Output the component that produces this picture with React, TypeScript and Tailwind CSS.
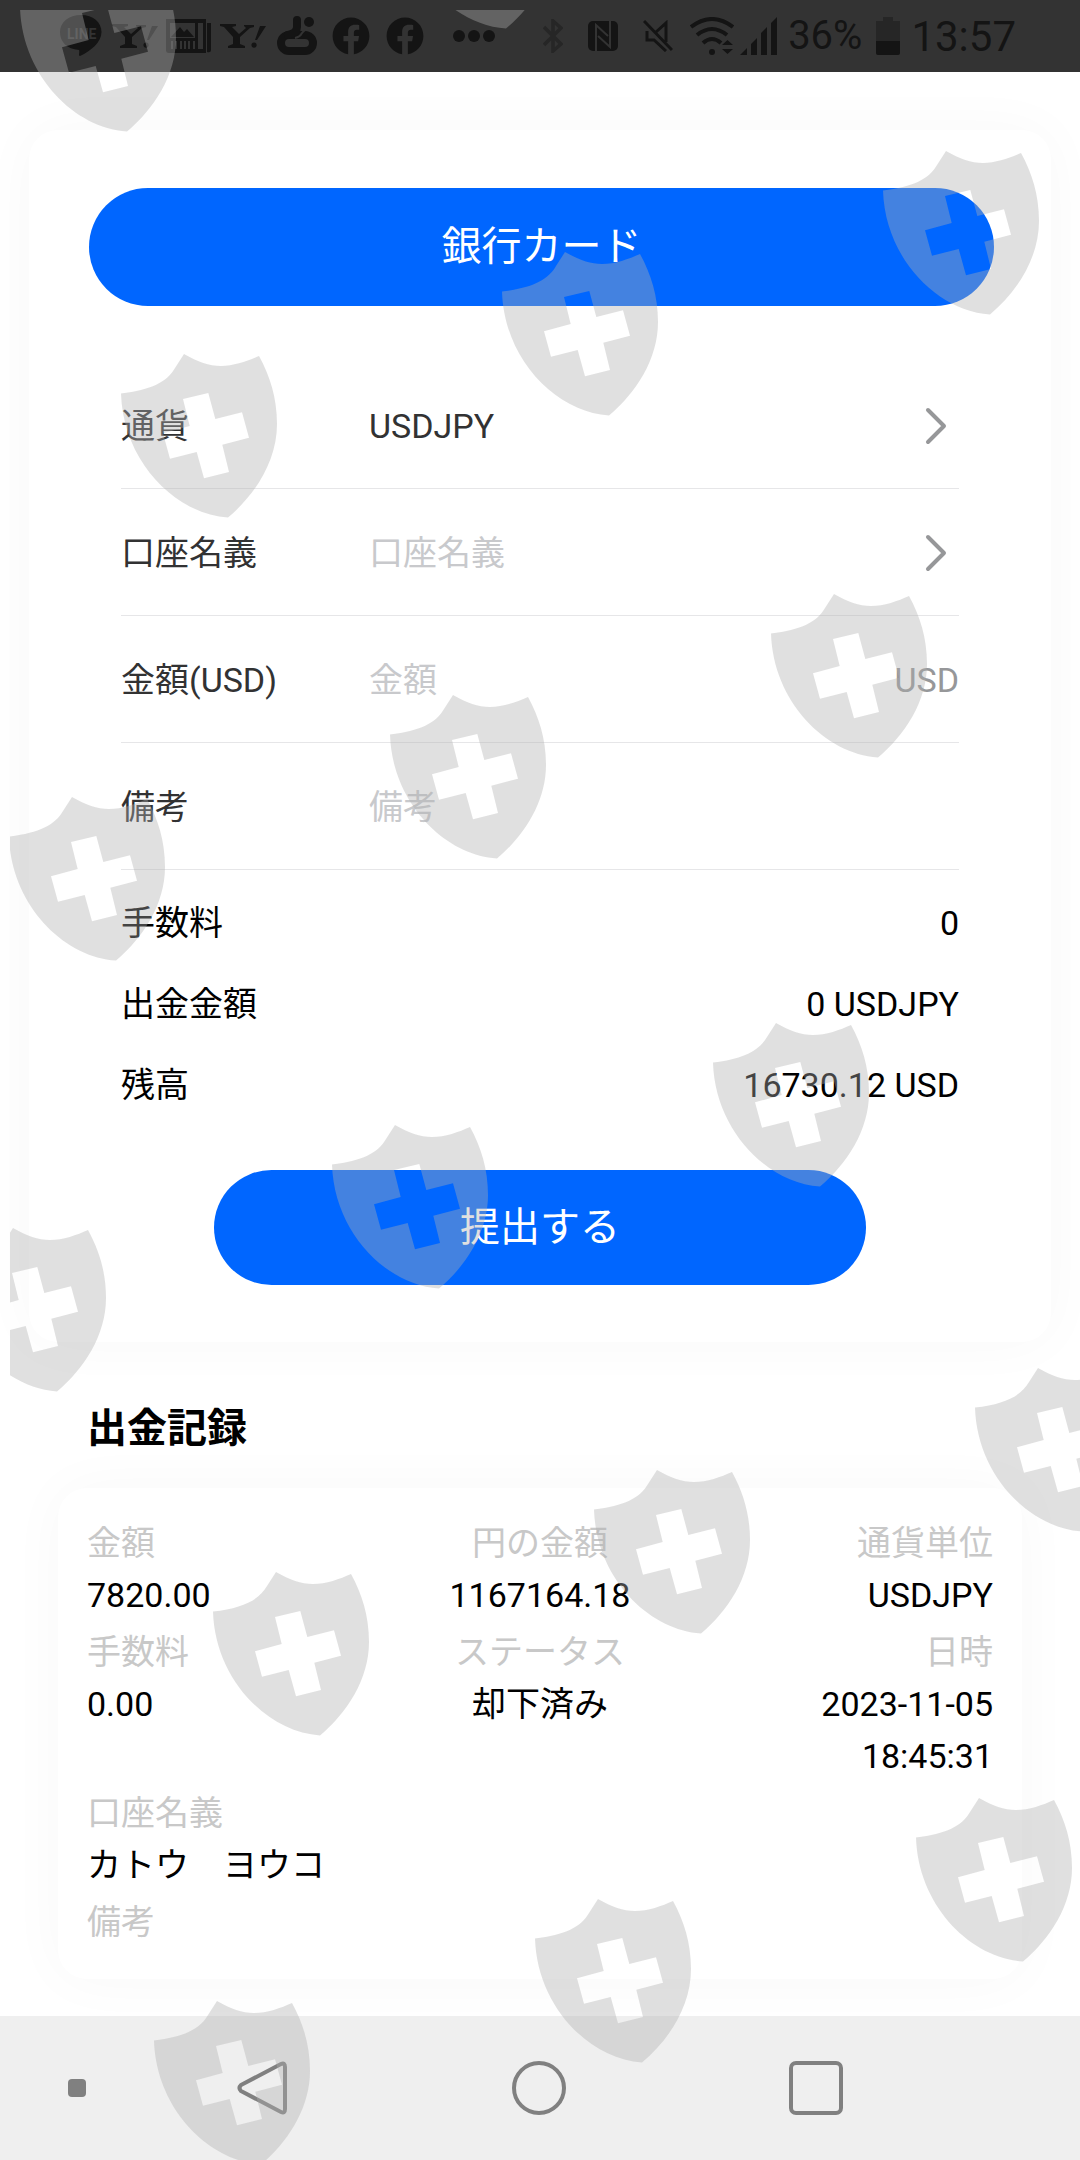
import React from "react";
import { FaFacebook } from "react-icons/fa";

const shields = [
  [20, -32],
  [399, -135],
  [883, 151],
  [502, 252],
  [121, 354],
  [771, 594],
  [390, 695],
  [9, 797],
  [713, 1023],
  [332, 1125],
  [-50, 1228],
  [975, 1368],
  [594, 1470],
  [213, 1572],
  [916, 1798],
  [535, 1899],
  [154, 2001],
];

function Watermark() {
  return (
    <div className="pointer-events-none absolute top-[10px] right-0 bottom-0 left-[10px] overflow-hidden" aria-hidden="true">
      <svg className="h-full w-full">
        <defs>
          <path
            id="shield"
            fillRule="evenodd"
            d="M63 0C77 8 88 12 100 12C113 12 127 7 138 2C149 22 156 44 156 70C156 107 134 141 107 163.500C54 160 2 107 0 39.500C30 36 46 28 54 14ZM62 45L68.700 72L42 79.300L49 104.700L75.700 98L83 124.300L108 118L101.300 90.700L128 83.700L121 58.300L94.300 65L87.300 39Z"
          />
        </defs>
        <g fill="#afafaf" fillOpacity="0.39">
          {shields.map(([x, y]) => (
            <use key={`${x}-${y}`} href="#shield" x={x - 10} y={y - 10} />
          ))}
        </g>
      </svg>
    </div>
  );
}

function YahooIcon() {
  return (
    <svg viewBox="0 0 46 24" className="h-6 w-[46px]" fill="currentColor">
      <path d="M0 0H16V2L12 3L19 10L26 4L24 2V1H34V3L30 4L20 13V20L25 22V24H8V22L13 20V13L4 3L0 2Z" />
      <path d="M40 2L46 2L37 16L35 16ZM34 18.500a2.600 2.600 0 1 0 .1 0Z" />
    </svg>
  );
}

function StatusBar() {
  return (
    <header className="flex h-[72px] items-center justify-between bg-[#333] pr-16 pl-[58px] font-[Roboto,sans-serif] text-[#141414]">
      <div className="flex items-center gap-2">
        <svg viewBox="0 0 46 42" className="h-[42px] w-[46px]" fill="currentColor">
          <path d="M23 0C35 0 43.500 7 43.500 17C43.500 27 33 36 22 41C20 41 22 37 21 35C9 34 2 27 2 17C2 7 11 0 23 0Z" />
          <text x="9" y="24" fontSize="14" fontWeight="700" fill="#333">LINE</text>
        </svg>
        <YahooIcon />
        <svg viewBox="0 0 46 34" className="h-[34px] w-[46px]">
          <path fill="currentColor" fillRule="evenodd" d="M0 0H40V34H3Q0 34 0 31V0ZM4 4V19H29V4ZM32 4V30H37V4Z" />
          <path stroke="#333" strokeWidth="2" d="M6 22V30M10 22V30M15 22V30M19 22V30M23 22V30M28 22V30" />
          <path fill="currentColor" d="M5 18L14 8L18 13L21 10L28 18ZM41 4H45V31Q45 34 41 33Z" />
        </svg>
        <YahooIcon />
        <svg viewBox="0 0 44 42" className="h-[42px] w-11" fill="none" stroke="currentColor">
          <rect x="7" y="20" width="32" height="16" rx="8" strokeWidth="8" />
          <path strokeWidth="8" strokeLinecap="round" d="M23 5V12Q23 18 14 20" />
          <path stroke="#333" strokeWidth="2" d="M35 13Q31 14 28 18Q26 22 21 23" />
          <circle cx="35" cy="7" r="5" fill="currentColor" stroke="none" />
        </svg>
        <FaFacebook className="ml-[6px] h-[38px] w-[38px]" />
        <FaFacebook className="ml-2 h-[38px] w-[38px]" />
        <svg viewBox="0 0 44 12" className="ml-5 h-3 w-11" fill="currentColor">
          <circle cx="7" cy="6" r="6" />
          <circle cx="22" cy="6" r="6" />
          <circle cx="37" cy="6" r="6" />
        </svg>
      </div>
      <div className="flex items-center">
        <svg viewBox="0 0 20 34" className="mr-[25px] h-[34px] w-5" fill="none" stroke="#262626" strokeWidth="3.500">
          <path d="M1 8L18 25L10 32V2L18 9L1 26" />
        </svg>
        <svg viewBox="0 0 30 30" className="mr-[25px] h-[30px] w-[30px]" fill="none">
          <rect width="30" height="30" rx="5" fill="currentColor" />
          <path stroke="#333" strokeWidth="2" d="M8 31V4L20 15M22 -1V26L10 15" />
        </svg>
        <svg viewBox="0 0 30 32" className="mr-[17px] h-8 w-[30px]" fill="none" stroke="currentColor" strokeWidth="3">
          <path d="M1 1L29 30M4 11V20H11L23 31M13 12L23 3V22" />
        </svg>
        <svg viewBox="0 0 44 38" className="mr-[6px] h-[38px] w-11" fill="none" stroke="currentColor" strokeWidth="4">
          <path d="M1 10Q22 -6 43 10M7 18Q22 6 37 18M13 26Q22 18 31 26" />
          <circle cx="22" cy="35" r="3" fill="currentColor" stroke="none" />
          <path d="M32 28L37.500 23L43 28ZM32 32H43L37.500 37Z" fill="currentColor" stroke="none" />
        </svg>
        <svg viewBox="0 0 38 38" className="mr-[10px] h-[38px] w-[38px]" fill="currentColor">
          <path d="M0 38L7 31V38ZM11 27L17 21V38H11ZM21 16L27 10V38H21ZM31 6L37 0V38H31Z" />
        </svg>
        <span className="mr-[14px] text-[40px] leading-[40px]">36%</span>
        <svg viewBox="0 0 24 38" className="mr-[11px] h-[38px] w-6">
          <path fill="#262626" d="M7 0H17V4H24V25H0V4H7Z" />
          <path fill="currentColor" d="M0 24H24V36Q24 38 22 38H2Q0 38 0 36Z" />
        </svg>
        <time className="pt-[2px] text-[42px] leading-[42px]">13:57</time>
      </div>
    </header>
  );
}

function Chevron() {
  return (
    <svg viewBox="0 0 24 40" className="mr-[11px] h-10 w-6" fill="none" stroke="#969799" strokeWidth="4" strokeLinecap="round" strokeLinejoin="round">
      <path d="M4 4L20 20L4 36" />
    </svg>
  );
}

function Field({ id, label, children }: { id: string; label: string; children: React.ReactNode }) {
  return (
    <div className="flex h-[127px] items-center border-b border-[#e6e6e8] pt-[2px] text-[#323233]">
      <label htmlFor={id} className="w-[248px] shrink-0">{label}</label>
      {children}
    </div>
  );
}

const inputClass = "min-w-0 flex-1 bg-transparent outline-none placeholder:text-[#c8c9cc] placeholder:opacity-100";

const totals = [
  ["手数料", "0"],
  ["出金金額", "0 USDJPY"],
  ["残高", "16730.12 USD"],
];

const record = [
  { label: "金額", value: "7820.00", align: "text-left" },
  { label: "円の金額", value: "1167164.18", align: "text-center" },
  { label: "通貨単位", value: "USDJPY", align: "text-right" },
  { label: "手数料", value: "0.00", align: "text-left" },
  { label: "ステータス", value: "却下済み", align: "text-center" },
  { label: "日時", value: "2023-11-05 18:45:31", align: "text-right" },
  { label: "口座名義", value: "カトウ　ヨウコ", align: "col-span-3 text-left" },
  { label: "備考", value: "", align: "col-span-3 text-left" },
];

function NavBar() {
  return (
    <nav className="grid h-36 grid-cols-[154fr_218fr_334fr_220fr_154fr] place-items-center bg-[#efefef] text-[#808080]">
      <span className="h-[18px] w-[18px] rounded bg-[#808080]" />
      <button aria-label="戻る" className="block">
        <svg viewBox="0 0 54 54" className="h-[54px] w-[54px]" fill="none" stroke="currentColor" strokeWidth="4" strokeLinejoin="round">
          <path d="M45 3Q49 1 49 6V48Q49 53 45 51L5 30Q2 27 5 24Z" />
        </svg>
      </button>
      <button aria-label="ホーム" className="block">
        <svg viewBox="0 0 54 54" className="h-[54px] w-[54px]" fill="none" stroke="currentColor" strokeWidth="4">
          <circle cx="27" cy="27" r="25" />
        </svg>
      </button>
      <button aria-label="アプリ履歴" className="block">
        <svg viewBox="0 0 54 54" className="h-[54px] w-[54px]" fill="none" stroke="currentColor" strokeWidth="4">
          <rect x="2" y="2" width="50" height="50" rx="5" />
        </svg>
      </button>
    </nav>
  );
}

export default function App() {
  return (
    <div className="relative flex min-h-screen flex-col overflow-hidden bg-white font-[Roboto,'Noto_Sans_CJK_JP',sans-serif] text-[34px] leading-[52px] text-black">
      <StatusBar />

      <main className="flex-1">
        <form
          className="mx-[29px] mt-[58px] rounded-[29px] bg-white pt-[58px] pb-[57px] shadow-[0_0_58px_rgba(0,0,0,0.03)]"
          onSubmit={(e) => e.preventDefault()}
        >
          <div className="pr-[57px] pl-[60px]">
            <button type="button" className="h-[118px] w-full rounded-full bg-[#0066ff] text-[40px] text-white">
              銀行カード
            </button>
          </div>

          <div className="mt-14 px-[92px]">
            <Field id="currency" label="通貨">
              <select id="currency" className="min-w-0 flex-1 appearance-none bg-transparent outline-none">
                <option>USDJPY</option>
              </select>
              <Chevron />
            </Field>
            <Field id="holder" label="口座名義">
              <input id="holder" placeholder="口座名義" className={inputClass} />
              <Chevron />
            </Field>
            <Field id="amount" label="金額(USD)">
              <input id="amount" placeholder="金額" className={inputClass} />
              <span className="text-[#969799]">USD</span>
            </Field>
            <Field id="remark" label="備考">
              <input id="remark" placeholder="備考" className={inputClass} />
            </Field>

            <dl className="mt-3">
              {totals.map(([label, value]) => (
                <div key={label} className="flex h-[81px] items-center justify-between">
                  <dt>{label}</dt>
                  <dd>{value}</dd>
                </div>
              ))}
            </dl>
          </div>

          <div className="mt-[45px] px-[185px]">
            <button type="submit" className="h-[115px] w-full rounded-full bg-[#0066ff] text-[40px] text-white">
              提出する
            </button>
          </div>
        </form>

        <h2 className="mt-[57px] px-[87px] text-[40px] leading-[60px] font-bold">出金記録</h2>

        <section className="mx-[58px] mt-[29px] mb-[37px] rounded-[29px] bg-white px-[29px] pt-[29px] pb-[31px] shadow-[0_0_58px_rgba(0,0,0,0.03)]">
          <dl className="grid grid-cols-3 gap-y-[5px]">
            {record.map(({ label, value, align }) => (
              <div key={label} className={align}>
                <dt className="text-[#c8c8c8]">{label}</dt>
                {value && <dd>{value}</dd>}
              </div>
            ))}
          </dl>
        </section>
      </main>

      <NavBar />
      <Watermark />
    </div>
  );
}
